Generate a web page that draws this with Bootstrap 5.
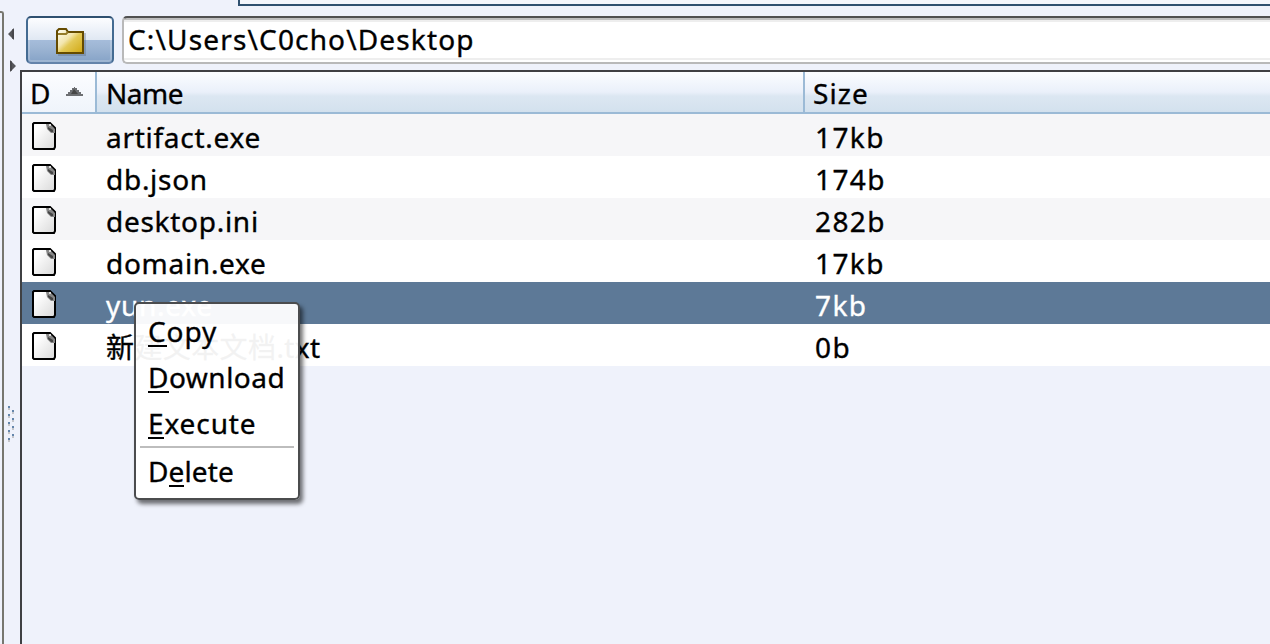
<!DOCTYPE html>
<html lang="en">
<head>
<meta charset="utf-8">
<title>File Browser</title>
<link href="https://cdn.jsdelivr.net/npm/bootstrap@5.3.0/dist/css/bootstrap.min.css" rel="stylesheet">
<style>
body{height:644px;background:#eff2fb;color:#000;font:28px/42px "Noto Sans","Noto Sans CJK SC",sans-serif;white-space:nowrap;-webkit-text-stroke:.35px currentColor}
.topstrip{height:6px;margin-left:238px;border-left:2px solid #2f506f;border-bottom:2px solid #2f506f;background:#f4f6fc}
.edge{width:4px;margin-top:5px;border-right:2px solid #77776f;border-top:2px solid #77776f;border-top-right-radius:3px}
.divider{width:16px}
.divider svg{display:block}
.tools{height:64px;padding:10px 0 0 6px;gap:8px}
.folderbtn{width:88px;height:48px;padding:0;border:2px solid;border-color:#2f5070 #446b92 #6483aa;border-radius:5px;background:linear-gradient(#fcfdff 0,#e0e8f3 50%,#a5bcda 51%,#9eb6d4 66%,#86a3c7 100%);box-shadow:inset 0 0 0 2px #ffffff30}
.folderbtn svg{display:block;margin:6px 0 0 26px}
.pathbox{height:48px;border:2px solid #b9b9b9;border-top-color:#505050;border-right:0;border-radius:5px 0 0 5px;background:linear-gradient(#bebebe 0 2px,#eee 2px 4px,#fff 4px 40px,#eee 40px 42px,#fff 42px);padding-left:4px;line-height:43px;letter-spacing:1.15px}
.files{border-left:2px solid #3f4043;border-top:2px solid #3f4043}
.headrow{height:42px;border-bottom:2px solid #9bbad6;background:linear-gradient(#fbfdff,#eaf0fa 50%,#dce7f2 60%,#d3e1ee);line-height:43px}
.c1{width:75px;padding-left:9px}
.headrow .c1{width:73px;padding-left:8px;background:linear-gradient(#fcfdff,#eff4fb)}
.c2{width:708px;padding-left:9px;letter-spacing:.72px}
.c3{padding-left:10px;letter-spacing:1.4px}
.headrow .c2,.headrow .c3{border-left:2px solid #9bbad6}
.headrow .c2{letter-spacing:-.5px}
.headrow .c3{padding-left:8px;letter-spacing:1.1px}
.sortmark{margin:14px 0 0 15px!important}
.filerow{height:42px;background:#fff;line-height:47px}
.filerow:nth-child(even){background:#f6f6f8}
.filerow.picked{background:#5d7997;color:#fff}
.filerow .mixed{letter-spacing:.4px}
.c1 svg{display:block;margin-top:8px}
.popup{left:134px;top:302px;width:166px;height:198px;border:2px solid #4b4c4e;border-radius:5px;background:#fffffff2;box-shadow:3px 4px 4px #0000008c;padding-top:4px}
.popup div{height:46px;line-height:46px;padding-left:12px;letter-spacing:.9px}
.popup .snug{letter-spacing:.5px}
.popup .tight{letter-spacing:.1px}
.popup hr{margin:0 4px;border:0;height:2px;background:#bdbdbd;opacity:1}
u{text-decoration:none;box-shadow:0 2px #000;display:inline-block;line-height:28px;height:28px}
</style>
</head>
<body class="m-0 overflow-hidden position-relative d-flex flex-column">
<div class="topstrip flex-shrink-0"></div>
<div class="d-flex flex-grow-1">
  <div class="edge flex-shrink-0"></div>
  <div class="divider flex-shrink-0">
    <svg width="16" height="638" viewBox="4 6 16 638">
      <path d="M8 34l6-6v12z M10 60v12l6-6z" fill="#55565a"/>
      <path d="M12 29h2v10h-2zM10 61h2v10h-2z" fill="#3f4042" opacity=".6"/>
      <path fill="#6486ab" d="M8 406h2v2h-2zM8 414h2v2h-2zM8 422h2v2h-2zM8 430h2v2h-2zM8 438h2v2h-2zM12 410h2v2h-2zM12 418h2v2h-2zM12 426h2v2h-2zM12 434h2v2h-2z"/>
      <path fill="#c5c6ca" d="M8 408h2v2h-2zM8 416h2v2h-2zM8 424h2v2h-2zM8 432h2v2h-2zM8 440h2v2h-2zM12 412h2v2h-2zM12 420h2v2h-2zM12 428h2v2h-2zM12 436h2v2h-2z"/>
    </svg>
  </div>
  <main class="flex-grow-1 d-flex flex-column">
    <div class="tools d-flex">
      <button class="folderbtn flex-shrink-0" aria-label="Up"><svg width="32" height="30" viewBox="54 28 32 30">
        <defs><linearGradient id="gold" x1="0" y1="0" x2="1" y2="1"><stop offset="0" stop-color="#fffef5"/><stop offset=".4" stop-color="#f3e6ae"/><stop offset=".55" stop-color="#e3c957"/><stop offset="1" stop-color="#d0a710"/></linearGradient></defs>
        <path d="M58 55h27V33" fill="none" stroke="#53647c" stroke-width="2" opacity=".35"/>
        <path d="M57 53V31l2-2h7l2 3h15v21z" fill="url(#gold)" stroke="#654b00" stroke-width="2"/>
        <path d="M58 34h8l2-2" fill="none" stroke="#957c29" stroke-width="2"/>
      </svg></button>
      <div class="pathbox flex-grow-1">C:\Users\C0cho\Desktop</div>
    </div>
    <div class="files flex-grow-1">
      <div class="headrow d-flex">
        <div class="c1 d-flex flex-shrink-0"><span>D</span><svg class="sortmark" width="18" height="10" viewBox="0 0 18 10"><path d="M1 10V8h2V6h2V4h2V2h2V1h1v1h2v2h2v2h2v2h2v2z" fill="#6d6f72"/><path d="M6 8l3-5 4 5z" fill="#464646"/></svg></div>
        <div class="c2 flex-shrink-0">Name</div><div class="c3 flex-grow-1">Size</div>
      </div>
      <div class="filerow d-flex"><div class="c1 flex-shrink-0"><svg width="26" height="28"><use href="#page"/></svg></div><div class="c2">artifact.exe</div><div class="c3">17kb</div></div>
      <div class="filerow d-flex"><div class="c1 flex-shrink-0"><svg width="26" height="28"><use href="#page"/></svg></div><div class="c2">db.json</div><div class="c3">174b</div></div>
      <div class="filerow d-flex"><div class="c1 flex-shrink-0"><svg width="26" height="28"><use href="#page"/></svg></div><div class="c2">desktop.ini</div><div class="c3">282b</div></div>
      <div class="filerow d-flex"><div class="c1 flex-shrink-0"><svg width="26" height="28"><use href="#page"/></svg></div><div class="c2">domain.exe</div><div class="c3">17kb</div></div>
      <div class="filerow picked d-flex"><div class="c1 flex-shrink-0"><svg width="26" height="28"><use href="#page"/></svg></div><div class="c2">yun.exe</div><div class="c3">7kb</div></div>
      <div class="filerow d-flex"><div class="c1 flex-shrink-0"><svg width="26" height="28"><use href="#page"/></svg></div><div class="c2 mixed">新建文本文档.txt</div><div class="c3">0b</div></div>
    </div>
  </main>
</div>
<div class="popup position-absolute">
  <div><u>C</u>opy</div><div class="snug"><u>D</u>ownload</div><div><u>E</u>xecute</div><hr><div class="tight">D<u>e</u>lete</div>
</div>
<svg width="0" height="0" class="position-absolute"><defs>
<linearGradient id="pg" x1="0" y1="0" x2="1" y2="1"><stop offset=".2" stop-color="#fff"/><stop offset="1" stop-color="#d9d9d9"/></linearGradient>
<g id="page"><path d="M3 1h16l5 5v19l-1 2H3l-1-1V2z" fill="url(#pg)" stroke="#000" stroke-width="2"/><path d="M15 2h4l5 5v4h-4l-4-4z" fill="#858585"/><path d="M17 5l5 3v2h-2l-3-3z" fill="#444"/><path d="M18 2h2v2h-2z" fill="#ddd"/></g>
</defs></svg>
<script src="https://cdn.jsdelivr.net/npm/bootstrap@5.3.0/dist/js/bootstrap.bundle.min.js"></script>
</body>
</html>
